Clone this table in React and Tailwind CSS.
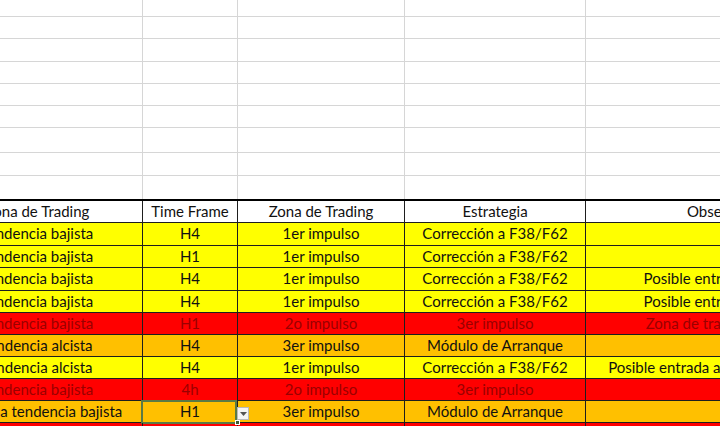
import React from 'react';

const COLS = 'grid grid-cols-[211px_95px_167px_181px_300px]';

const emptyRows = ['h-[17px]', 'h-[22px]', 'h-[23px]', 'h-[22px]', 'h-[22px]', 'h-[22px]', 'h-[25px]', 'h-[23px]'];

const fills = {
  y: 'bg-[#ffff00] text-[#111111]',
  r: 'bg-[#ff0000] text-[#9a0000]',
  o: 'bg-[#ffc000] text-[#111111]',
};

const rows = [
  { bg: 'y', h: 'h-[23px]', a: 'Tendencia bajista', b: 'H4', c: '1er impulso', d: 'Corrección a F38/F62', e: '' },
  { bg: 'y', h: 'h-[22px]', a: 'Tendencia bajista', b: 'H1', c: '1er impulso', d: 'Corrección a F38/F62', e: '' },
  { bg: 'y', h: 'h-[23px]', a: 'Tendencia bajista', b: 'H4', c: '1er impulso', d: 'Corrección a F38/F62', e: 'Posible entrada en corto H1' },
  { bg: 'y', h: 'h-[22px]', a: 'Tendencia bajista', b: 'H4', c: '1er impulso', d: 'Corrección a F38/F62', e: 'Posible entrada en corto H4' },
  { bg: 'r', h: 'h-[22px]', a: 'Tendencia bajista', b: 'H1', c: '2o impulso', d: '3er impulso', e: 'Zona de trading sin entrada' },
  { bg: 'o', h: 'h-[22px]', a: 'Tendencia alcista', b: 'H4', c: '3er impulso', d: 'Módulo de Arranque', e: '' },
  { bg: 'y', h: 'h-[22px]', a: 'Tendencia alcista', b: 'H4', c: '1er impulso', d: 'Corrección a F38/F62', e: 'Posible entrada al alza tras el retroceso' },
  { bg: 'r', h: 'h-[22px]', a: 'Tendencia bajista', b: '4h', c: '2o impulso', d: '3er impulso', e: '' },
  { bg: 'o', h: 'h-[22px]', a: 'Vuelve a tendencia bajista', b: 'H1', c: '3er impulso', d: 'Módulo de Arranque', e: '', selected: true },
  { bg: 'r', h: 'h-[22px]', a: 'Tendencia bajista', b: 'H1', c: '2o impulso', d: '3er impulso', e: '' },
];

function Cell({ children, className = '' }) {
  return (
    <div className={`relative border-r border-b border-[#1e1e1e] text-center leading-[21px] whitespace-nowrap ${className}`}>
      {children}
    </div>
  );
}

function Dropdown() {
  return (
    <div className="absolute left-[94px] top-[6px] z-10 w-[12px] h-[13px] bg-[#f4f4f4] border border-[#b9b9b9] flex items-center justify-center">
      <svg width="7" height="4" viewBox="0 0 7 4">
        <path d="M0 0H7L3.5 4Z" fill="#555" />
      </svg>
    </div>
  );
}

export default function App() {
  return (
    <div className="w-[720px] h-[426px] overflow-hidden bg-white font-['Lato',sans-serif] text-[15px]">
      <div className="w-[954px] -ml-[68px]">
        {emptyRows.map((h, i) => (
          <div key={i} className={COLS}>
            {[0, 1, 2, 3, 4].map((c) => (
              <div key={c} className={`${h} border-r border-b border-[#d6d6d6]`} />
            ))}
          </div>
        ))}
        <div className={`${COLS} border-b-2 border-black`}>
          {[0, 1, 2, 3, 4].map((c) => (
            <div key={c} className="h-[23px] border-r border-[#d6d6d6]" />
          ))}
        </div>

        <div className={`${COLS} bg-white text-[#111111]`}>
          <Cell className="h-[22px]">Zona de Trading</Cell>
          <Cell className="h-[22px]">Time Frame</Cell>
          <Cell className="h-[22px]">Zona de Trading</Cell>
          <Cell className="h-[22px]">Estrategia</Cell>
          <Cell className="h-[22px]">Observaciones</Cell>
        </div>

        {rows.map((r, i) => (
          <div key={i} className={`${COLS} ${fills[r.bg]}`}>
            <Cell className={r.h}>{r.a}</Cell>
            <Cell className={r.h}>
              {r.b}
              {r.selected && (
                <>
                  <div className="absolute -left-[2px] -top-[1px] w-[96px] h-[24px] border-2 border-[#5a7a45] pointer-events-none" />
                  <div className="absolute right-[-3px] bottom-[-3px] w-[5px] h-[5px] bg-[#3e5a34] border border-white z-10" />
                  <Dropdown />
                </>
              )}
            </Cell>
            <Cell className={r.h}>{r.c}</Cell>
            <Cell className={r.h}>{r.d}</Cell>
            <Cell className={r.h}>{r.e}</Cell>
          </div>
        ))}
      </div>
    </div>
  );
}
